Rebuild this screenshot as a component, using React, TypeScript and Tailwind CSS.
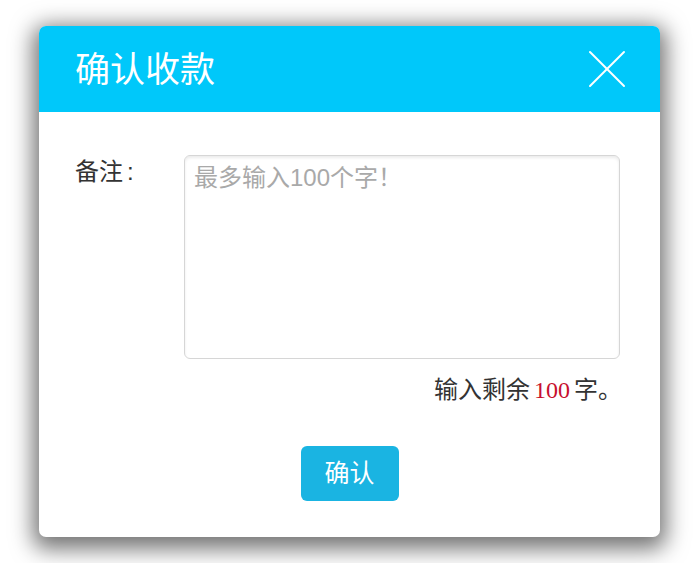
import React from "react";

export default function App() {
  const cjk = { fontFamily: '"Liberation Sans", "Noto Sans CJK SC", sans-serif' };
  return (
    <div className="w-[700px] h-[563px] bg-white pl-[39px] pt-[26px]" style={cjk}>
      <div className="w-[621px] h-[511px] rounded-[7px] overflow-hidden bg-white shadow-[0_6px_22px_6px_rgba(0,0,0,0.55)] flex flex-col">
        <div className="h-[86px] bg-[#00c8fa] flex items-center justify-between pl-[36px] pr-[34px]">
          <span className="text-white text-[35px] leading-none">确认收款</span>
          <svg width="38" height="38" viewBox="0 0 38 38" fill="none" stroke="white" strokeWidth="2" strokeLinecap="round">
            <line x1="2" y1="2" x2="36" y2="36" />
            <line x1="36" y1="2" x2="2" y2="36" />
          </svg>
        </div>
        <div className="flex flex-col flex-1">
          <div className="flex mt-[43px] pl-[36px]">
            <div className="w-[109px] text-[24px] leading-[32px] text-[#333] pt-[1px]">备注<span className="pl-[4px]">:</span></div>
            <textarea
              className="w-[436px] h-[204px] border border-[#d6d6d6] rounded-[6px] shadow-[inset_0_2px_3px_rgba(0,0,0,0.08)] px-[9px] py-[6px] text-[24px] leading-[32px] text-[#333] placeholder:text-[#a9a9a9] resize-none outline-none"
              placeholder="最多输入100个字！"
              style={cjk}
            />
          </div>
          <div className="flex justify-end pr-[38px] mt-[15px] text-[24px] leading-[32px] text-[#333]">
            <span>输入剩余</span>
            <span className="text-[#c8102e] px-[4px]" style={{ fontFamily: '"Liberation Serif", serif' }}>100</span>
            <span>字。</span>
          </div>
          <div className="flex justify-center mt-[40px]">
            <button className="w-[98px] h-[55px] rounded-[6px] bg-[#1ab4e2] text-white text-[25px] leading-none" style={cjk}>
              确认
            </button>
          </div>
        </div>
      </div>
    </div>
  );
}
